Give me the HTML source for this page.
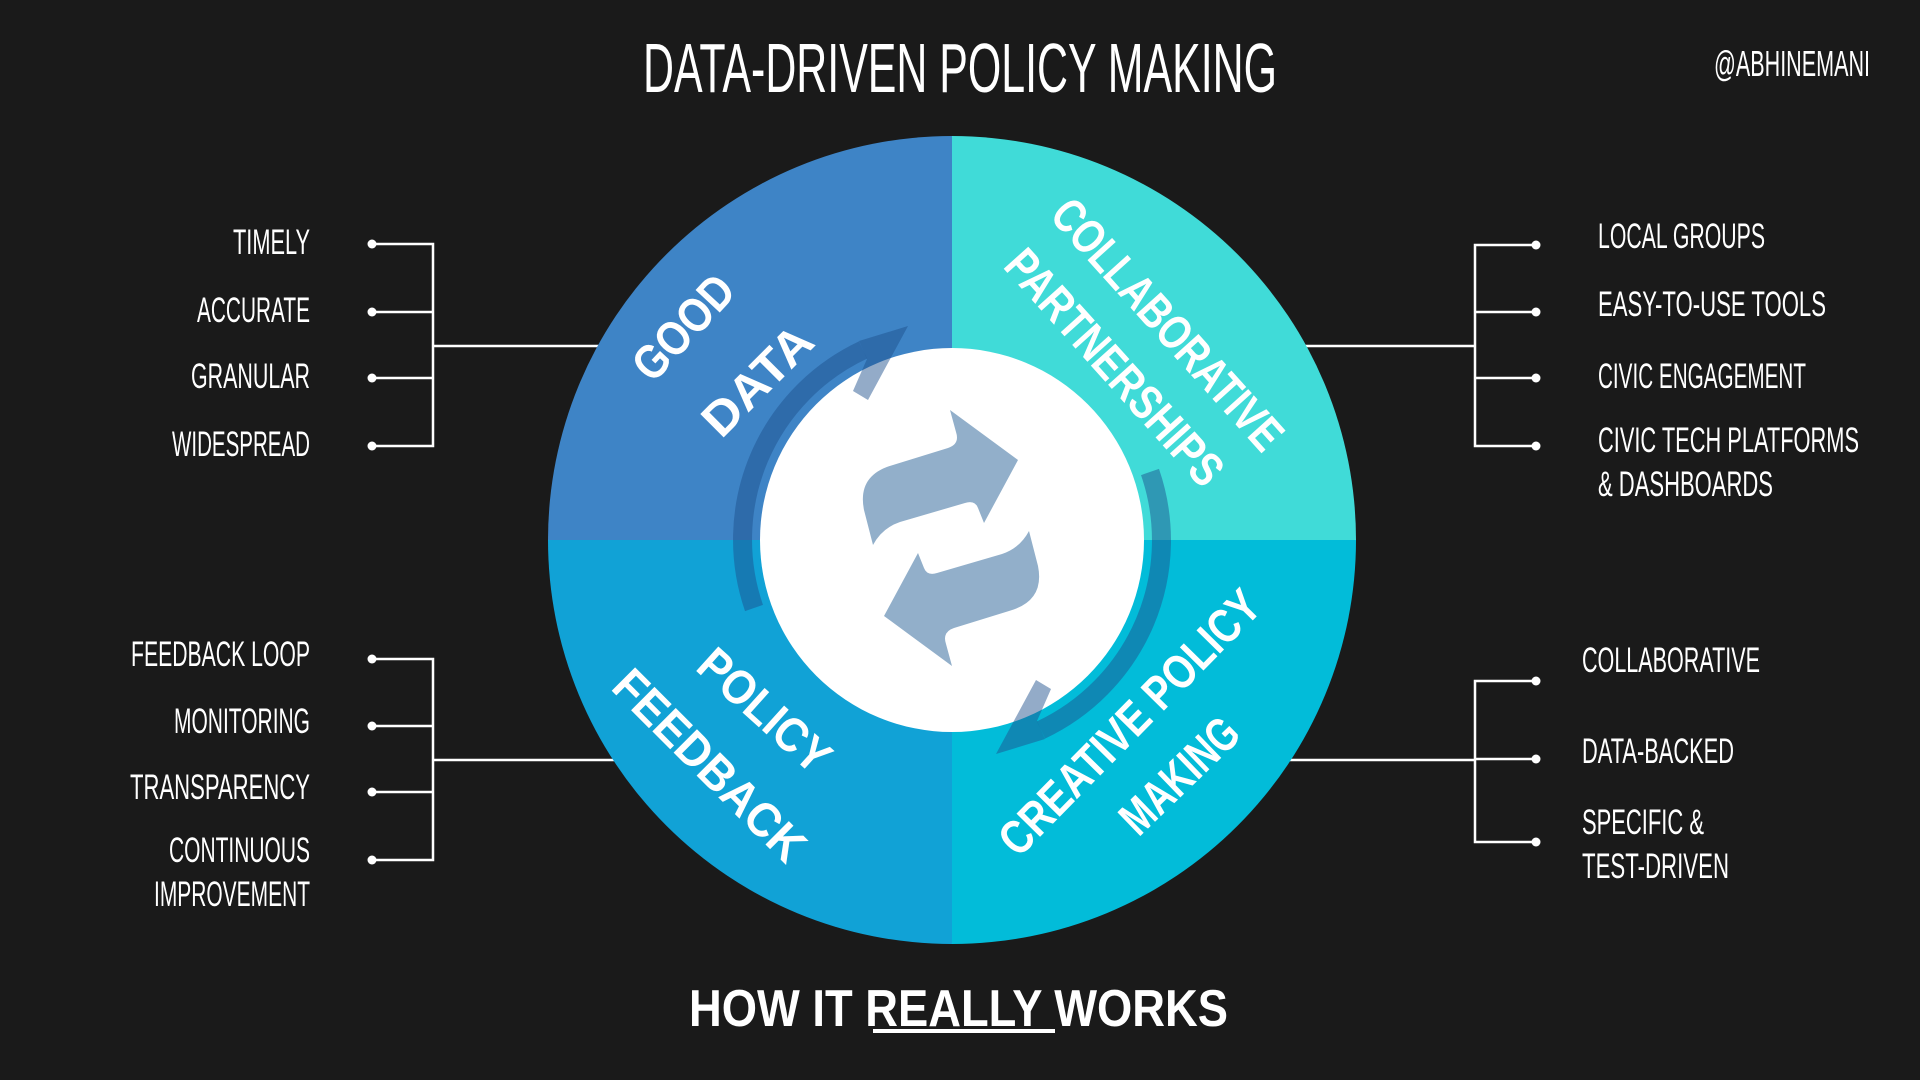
<!DOCTYPE html>
<html><head><meta charset="utf-8"><style>
html,body{margin:0;padding:0;background:#1a1a1a;}
svg{display:block}
.t{font-family:"Liberation Sans",sans-serif;fill:#fff}
.l{font-family:"Liberation Sans",sans-serif;fill:#fff;font-size:35px}
.q{font-family:"Liberation Sans",sans-serif;font-weight:bold;fill:#fff;font-size:48px}
</style></head><body>
<svg width="1920" height="1080" viewBox="0 0 1920 1080" xmlns="http://www.w3.org/2000/svg">
<rect width="1920" height="1080" fill="#1a1a1a"/>
<!-- title -->
<text class="t" x="643" y="92" font-size="70" textLength="634" lengthAdjust="spacingAndGlyphs">DATA-DRIVEN POLICY MAKING</text>
<text class="t" x="1714" y="76" font-size="36" textLength="156" lengthAdjust="spacingAndGlyphs">@ABHINEMANI</text>

<!-- connector lines -->
<g stroke="#fff" stroke-width="2.5" fill="none">
<path d="M372 244H433V446H372M372 312H433M372 378H433M433 346H605"/>
<path d="M372 659H433V860H372M372 726H433M372 792H433M433 760H620"/>
<path d="M1536 245H1475V446H1536M1536 312H1475M1536 378H1475M1475 346H1300"/>
<path d="M1536 681H1475V842H1536M1536 759H1475M1475 760H1285"/>
</g>
<g fill="#fff">
<circle cx="372" cy="244" r="4.5"/><circle cx="372" cy="312" r="4.5"/><circle cx="372" cy="378" r="4.5"/><circle cx="372" cy="446" r="4.5"/>
<circle cx="372" cy="659" r="4.5"/><circle cx="372" cy="726" r="4.5"/><circle cx="372" cy="792" r="4.5"/><circle cx="372" cy="860" r="4.5"/>
<circle cx="1536" cy="245" r="4.5"/><circle cx="1536" cy="312" r="4.5"/><circle cx="1536" cy="378" r="4.5"/><circle cx="1536" cy="446" r="4.5"/>
<circle cx="1536" cy="681" r="4.5"/><circle cx="1536" cy="759" r="4.5"/><circle cx="1536" cy="842" r="4.5"/>
</g>

<!-- left lists -->
<g class="l" text-anchor="end">
<text x="310" y="254" textLength="77" lengthAdjust="spacingAndGlyphs">TIMELY</text>
<text x="310" y="322" textLength="113" lengthAdjust="spacingAndGlyphs">ACCURATE</text>
<text x="310" y="388" textLength="119" lengthAdjust="spacingAndGlyphs">GRANULAR</text>
<text x="310" y="456" textLength="138" lengthAdjust="spacingAndGlyphs">WIDESPREAD</text>
<text x="310" y="666" textLength="179" lengthAdjust="spacingAndGlyphs">FEEDBACK LOOP</text>
<text x="310" y="733" textLength="136" lengthAdjust="spacingAndGlyphs">MONITORING</text>
<text x="310" y="799" textLength="180" lengthAdjust="spacingAndGlyphs">TRANSPARENCY</text>
<text x="310" y="862" textLength="141" lengthAdjust="spacingAndGlyphs">CONTINUOUS</text>
<text x="310" y="906" textLength="156" lengthAdjust="spacingAndGlyphs">IMPROVEMENT</text>
</g>
<g class="l">
<text x="1598" y="248" textLength="167" lengthAdjust="spacingAndGlyphs">LOCAL GROUPS</text>
<text x="1598" y="316" textLength="228" lengthAdjust="spacingAndGlyphs">EASY-TO-USE TOOLS</text>
<text x="1598" y="388" textLength="208" lengthAdjust="spacingAndGlyphs">CIVIC ENGAGEMENT</text>
<text x="1598" y="452" textLength="261" lengthAdjust="spacingAndGlyphs">CIVIC TECH PLATFORMS</text>
<text x="1598" y="496" textLength="175" lengthAdjust="spacingAndGlyphs">&amp; DASHBOARDS</text>
<text x="1582" y="672" textLength="178" lengthAdjust="spacingAndGlyphs">COLLABORATIVE</text>
<text x="1582" y="763" textLength="152" lengthAdjust="spacingAndGlyphs">DATA-BACKED</text>
<text x="1582" y="834" textLength="122" lengthAdjust="spacingAndGlyphs">SPECIFIC &amp;</text>
<text x="1582" y="878" textLength="147" lengthAdjust="spacingAndGlyphs">TEST-DRIVEN</text>
</g>

<!-- circle quadrants -->
<path d="M952 540V136A404 404 0 0 0 548 540Z" fill="#3e84c6"/>
<path d="M952 540V136A404 404 0 0 1 1356 540Z" fill="#40dbd8"/>
<path d="M952 540H548A404 404 0 0 0 952 944Z" fill="#11a2d6"/>
<path d="M952 540H1356A404 404 0 0 1 952 944Z" fill="#02bcd9"/>

<!-- arcs -->
<g id="arcA">
<path d="M754 608A209.5 209.5 0 0 1 863 350" fill="none" stroke="rgba(30,80,140,0.48)" stroke-width="19"/>
</g>
<use href="#arcA" transform="rotate(180 952 540)"/>
<circle cx="952" cy="540" r="192" fill="#fff"/>
<g id="headA">
<polygon points="859,341 908,326 868,400 853,391 867,359" fill="rgba(30,80,140,0.48)"/>
</g>
<use href="#headA" transform="rotate(180 952 540)"/>

<!-- refresh icon -->
<g fill="#92afca">
<path id="upArr" d="M873 545 L864 510 Q857 475 893 465 L948 448 Q960 444 956 432 L950 410 L1018 460 L984 523 L978 508 Q975 500 965 503 L900 522 Q882 528 873 545 Z"/>
<use href="#upArr" transform="rotate(180 951 538)"/>
</g>

<!-- quadrant labels -->
<g class="q" text-anchor="middle">
<text transform="translate(683 327) rotate(-47)" y="17" textLength="125" lengthAdjust="spacingAndGlyphs">GOOD</text>
<text transform="translate(757 380) rotate(-45)" y="17" textLength="135" lengthAdjust="spacingAndGlyphs">DATA</text>
<text transform="translate(1168 324) rotate(48)" y="17" textLength="320" lengthAdjust="spacingAndGlyphs">COLLABORATIVE</text>
<text transform="translate(1115 367) rotate(48)" y="17" textLength="300" lengthAdjust="spacingAndGlyphs">PARTNERSHIPS</text>
<text transform="translate(765 710) rotate(42)" y="17" textLength="160" lengthAdjust="spacingAndGlyphs">POLICY</text>
<text transform="translate(710 765) rotate(45)" y="17" textLength="250" lengthAdjust="spacingAndGlyphs">FEEDBACK</text>
<text transform="translate(1129 722) rotate(-45.5)" y="17" textLength="350" lengthAdjust="spacingAndGlyphs">CREATIVE POLICY</text>
<text transform="translate(1179 775) rotate(-44)" y="17" textLength="145" lengthAdjust="spacingAndGlyphs">MAKING</text>
</g>

<!-- bottom -->
<text x="689" y="1026" font-family="Liberation Sans,sans-serif" font-weight="bold" font-size="52" fill="#fff" textLength="539" lengthAdjust="spacingAndGlyphs">HOW IT REALLY WORKS</text>
<rect x="873" y="1029" width="182" height="4" fill="#fff"/>
</svg>
</body></html>
